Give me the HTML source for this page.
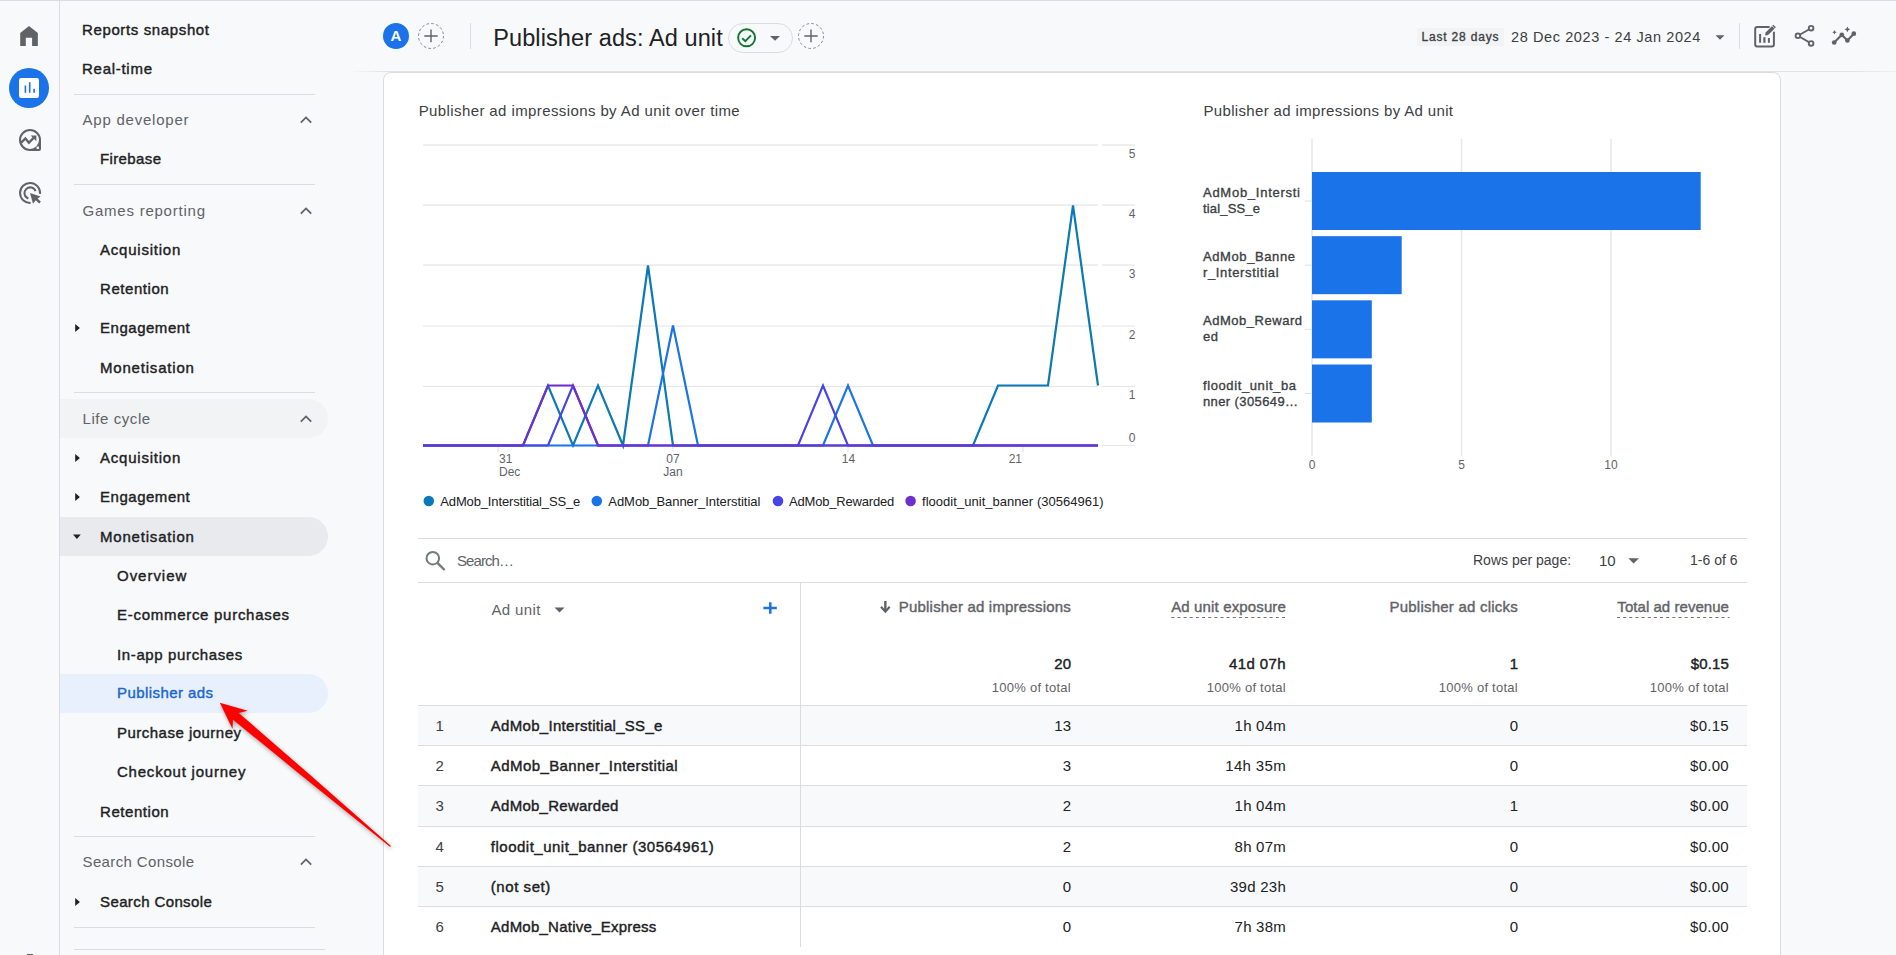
<!DOCTYPE html>
<html><head><meta charset="utf-8"><title>Publisher ads: Ad unit</title><style>
*{box-sizing:border-box;margin:0;padding:0}
html,body{width:1896px;height:955px;overflow:hidden}
body{background:#f8f9fa;font-family:"Liberation Sans",sans-serif;position:relative}
.a{position:absolute}
.t{position:absolute;white-space:nowrap}
svg{position:absolute;overflow:visible}
</style></head><body>
<div class="a" style="left:0;top:0;width:1896px;height:1px;background:#dadce0"></div>
<div class="a" style="left:59px;top:0;width:1px;height:955px;background:#dadce0"></div>
<div class="a" style="left:27px;top:954px;width:6px;height:1px;background:#5f6368"></div>
<svg style="left:0;top:0" width="60" height="220" viewBox="0 0 60 220">
<path d="M20.2 46V33L29 26.1 37.85 33V46H32.1V37.8H25.8V46Z" fill="#5f6368"/>
<circle cx="29" cy="88" r="20" fill="#1a73e8"/>
<rect x="19" y="78" width="20" height="20" rx="2.2" fill="#fff"/>
<rect x="24.6" y="85.5" width="1.6" height="7.3" fill="#1a73e8"/>
<rect x="28.9" y="82.2" width="1.6" height="10.6" fill="#1a73e8"/>
<rect x="33.3" y="88.8" width="1.6" height="4" fill="#1a73e8"/>
<path fill-rule="evenodd" fill="#5f6368" d="M30 129A11 11 0 0 0 19 140A11 11 0 0 0 30 151H39A2 2 0 0 0 41 149V140A11 11 0 0 0 30 129ZM30 131A9 9 0 1 1 30 149A9 9 0 1 1 30 131ZM36.6 146.6h2.3v2.3h-2.3Z"/>
<path d="M21.2 142.6L25.4 138.4 28.9 142.8 33.6 137.9" fill="none" stroke="#5f6368" stroke-width="2.3" stroke-linejoin="miter"/>
<path d="M30.7 135.6H36.4V141.3Z" fill="#5f6368"/>
<path d="M40 193.8A10 10 0 1 0 30.6 202.9" fill="none" stroke="#5f6368" stroke-width="2"/>
<path d="M35.6 191.2A5.7 5.7 0 1 0 28.4 198.5" fill="none" stroke="#5f6368" stroke-width="2"/>
<path d="M30 193L40.6 196.6 37.6 198.4 40.9 201.8 39.1 203.6 35.8 200.3 33 203.7Z" fill="#5f6368"/>
</svg>
<div class="a" style="left:60px;top:399px;width:268px;height:39px;background:#f1f3f4;border-radius:0 19.5px 19.5px 0"></div>
<div class="a" style="left:60px;top:517px;width:268px;height:39px;background:#e8eaed;border-radius:0 19.5px 19.5px 0"></div>
<div class="a" style="left:60px;top:674px;width:268px;height:39px;background:#e8f0fe;border-radius:0 19.5px 19.5px 0"></div>
<div class="t" style="left:82px;top:21px;font-size:15px;line-height:17px;-webkit-text-stroke:0.4px #202124;color:#202124;letter-spacing:0.628px;">Reports snapshot</div>
<div class="t" style="left:82px;top:60px;font-size:15px;line-height:17px;-webkit-text-stroke:0.4px #202124;color:#202124;letter-spacing:0.727px;">Real-time</div>
<div class="a" style="left:74px;top:94px;width:241px;height:1px;background:#dadce0"></div>
<div class="t" style="left:82.5px;top:111px;font-size:15px;line-height:17px;color:#5f6368;letter-spacing:0.771px;">App developer</div>
<svg style="left:0;top:0" width="1" height="1"><path d="M300.8 122.6L306 117.4L311.2 122.6" fill="none" stroke="#5f6368" stroke-width="1.8"/></svg>
<div class="t" style="left:100px;top:150px;font-size:15px;line-height:17px;-webkit-text-stroke:0.4px #202124;color:#202124;letter-spacing:0.377px;">Firebase</div>
<div class="a" style="left:74px;top:184px;width:241px;height:1px;background:#dadce0"></div>
<div class="t" style="left:82.5px;top:202px;font-size:15px;line-height:17px;color:#5f6368;letter-spacing:0.770px;">Games reporting</div>
<svg style="left:0;top:0" width="1" height="1"><path d="M300.8 213.6L306 208.4L311.2 213.6" fill="none" stroke="#5f6368" stroke-width="1.8"/></svg>
<div class="t" style="left:100px;top:241px;font-size:15px;line-height:17px;-webkit-text-stroke:0.4px #202124;color:#202124;letter-spacing:0.775px;">Acquisition</div>
<div class="t" style="left:100px;top:280px;font-size:15px;line-height:17px;-webkit-text-stroke:0.4px #202124;color:#202124;letter-spacing:0.560px;">Retention</div>
<div class="t" style="left:100px;top:319px;font-size:15px;line-height:17px;-webkit-text-stroke:0.4px #202124;color:#202124;letter-spacing:0.525px;">Engagement</div>
<svg style="left:0;top:0" width="1" height="1"><path d="M75.2 324L79.9 328L75.2 332Z" fill="#202124"/></svg>
<div class="t" style="left:100px;top:359px;font-size:15px;line-height:17px;-webkit-text-stroke:0.4px #202124;color:#202124;letter-spacing:0.803px;">Monetisation</div>
<div class="a" style="left:74px;top:392px;width:241px;height:1px;background:#dadce0"></div>
<div class="t" style="left:82.5px;top:410px;font-size:15px;line-height:17px;color:#5f6368;letter-spacing:0.574px;">Life cycle</div>
<svg style="left:0;top:0" width="1" height="1"><path d="M300.8 421.6L306 416.4L311.2 421.6" fill="none" stroke="#5f6368" stroke-width="1.8"/></svg>
<div class="t" style="left:100px;top:449px;font-size:15px;line-height:17px;-webkit-text-stroke:0.4px #202124;color:#202124;letter-spacing:0.775px;">Acquisition</div>
<svg style="left:0;top:0" width="1" height="1"><path d="M75.2 454L79.9 458L75.2 462Z" fill="#202124"/></svg>
<div class="t" style="left:100px;top:488px;font-size:15px;line-height:17px;-webkit-text-stroke:0.4px #202124;color:#202124;letter-spacing:0.525px;">Engagement</div>
<svg style="left:0;top:0" width="1" height="1"><path d="M75.2 493L79.9 497L75.2 501Z" fill="#202124"/></svg>
<div class="t" style="left:100px;top:528px;font-size:15px;line-height:17px;-webkit-text-stroke:0.4px #202124;color:#202124;letter-spacing:0.803px;">Monetisation</div>
<svg style="left:0;top:0" width="1" height="1"><path d="M73 534.5L80.8 534.5L76.9 539Z" fill="#202124"/></svg>
<div class="t" style="left:117px;top:567px;font-size:15px;line-height:17px;-webkit-text-stroke:0.4px #202124;color:#202124;letter-spacing:0.969px;">Overview</div>
<div class="t" style="left:117px;top:606px;font-size:15px;line-height:17px;-webkit-text-stroke:0.4px #202124;color:#202124;letter-spacing:0.716px;">E-commerce purchases</div>
<div class="t" style="left:117px;top:646px;font-size:15px;line-height:17px;-webkit-text-stroke:0.4px #202124;color:#202124;letter-spacing:0.626px;">In-app purchases</div>
<div class="t" style="left:117px;top:684px;font-size:15px;line-height:17px;-webkit-text-stroke:0.4px #1967d2;color:#1967d2;letter-spacing:0.426px;">Publisher ads</div>
<div class="t" style="left:117px;top:724px;font-size:15px;line-height:17px;-webkit-text-stroke:0.4px #202124;color:#202124;letter-spacing:0.484px;">Purchase journey</div>
<div class="t" style="left:117px;top:763px;font-size:15px;line-height:17px;-webkit-text-stroke:0.4px #202124;color:#202124;letter-spacing:0.778px;">Checkout journey</div>
<div class="t" style="left:100px;top:803px;font-size:15px;line-height:17px;-webkit-text-stroke:0.4px #202124;color:#202124;letter-spacing:0.560px;">Retention</div>
<div class="a" style="left:74px;top:836px;width:241px;height:1px;background:#dadce0"></div>
<div class="t" style="left:82.5px;top:853px;font-size:15px;line-height:17px;color:#5f6368;letter-spacing:0.374px;">Search Console</div>
<svg style="left:0;top:0" width="1" height="1"><path d="M300.8 864.6L306 859.4L311.2 864.6" fill="none" stroke="#5f6368" stroke-width="1.8"/></svg>
<div class="t" style="left:100px;top:893px;font-size:15px;line-height:17px;-webkit-text-stroke:0.4px #202124;color:#202124;letter-spacing:0.390px;">Search Console</div>
<svg style="left:0;top:0" width="1" height="1"><path d="M75.2 898L79.9 902L75.2 906Z" fill="#202124"/></svg>
<div class="a" style="left:74px;top:927px;width:241px;height:1px;background:#dadce0"></div>
<div class="a" style="left:74px;top:949px;width:251px;height:1px;background:#dadce0"></div>
<div class="a" style="left:348px;top:71px;width:1548px;height:1px;background:linear-gradient(90deg,rgba(60,64,67,0),rgba(60,64,67,.12) 40px,rgba(60,64,67,.12) 1500px,rgba(60,64,67,.05))"></div>
<svg style="left:0;top:0" width="1" height="1">
<circle cx="396" cy="36" r="13" fill="#1a73e8"/>
<circle cx="431" cy="36" r="12.5" fill="none" stroke="#80868b" stroke-width="1" stroke-dasharray="2.6 2.3"/>
<path d="M424.3 36H437.7M431 29.6V42.3" stroke="#5f6368" stroke-width="1.4"/>
<rect x="470" y="23" width="1" height="26" fill="#dadce0"/>
<rect x="728.5" y="23.5" width="64" height="29" rx="14.5" fill="none" stroke="#dadce0"/>
<circle cx="746.6" cy="37.8" r="8.5" fill="none" stroke="#137333" stroke-width="1.9"/>
<path d="M742.2 38.2L745.3 41.2L751 35.3" fill="none" stroke="#137333" stroke-width="1.9"/>
<path d="M770 36.1H780L775 40.8Z" fill="#5f6368"/>
<circle cx="811" cy="36" r="12.5" fill="none" stroke="#80868b" stroke-width="1" stroke-dasharray="2.6 2.3"/>
<path d="M804.3 36H817.7M811 29.6V42.3" stroke="#5f6368" stroke-width="1.4"/>
<rect x="1417" y="28" width="87" height="18" fill="#f1f3f4"/>
<path d="M1715.5 35.2H1724.5L1720 39.8Z" fill="#5f6368"/>
<rect x="1739" y="23" width="1" height="26" fill="#dadce0"/>
<path d="M1769.6 27.1H1757.2A2 2 0 0 0 1755.2 29.1V44.5A2 2 0 0 0 1757.2 46.5H1771.9A2 2 0 0 0 1773.9 44.5V31.7" fill="none" stroke="#5f6368" stroke-width="2"/>
<rect x="1759.1" y="34" width="2" height="8.8" fill="#5f6368"/>
<rect x="1763.3" y="37.2" width="2.2" height="5.6" fill="#5f6368"/>
<rect x="1767.9" y="38" width="2" height="4.8" fill="#5f6368"/>
<path d="M1765.1 35.6L1765.6 32.6L1773.4 24.8L1775.9 27.3L1768.1 35.1Z" fill="#5f6368"/>
<path d="M1772.2 26L1774.7 28.5" stroke="#f8f9fa" stroke-width="0.8"/>
<path d="M1811.1 28.2L1797.9 35.8L1811.1 43.4" fill="none" stroke="#5f6368" stroke-width="1.8"/>
<circle cx="1811.1" cy="28.2" r="2.3" fill="#f8f9fa" stroke="#5f6368" stroke-width="1.9"/>
<circle cx="1797.9" cy="35.8" r="2.3" fill="#f8f9fa" stroke="#5f6368" stroke-width="1.9"/>
<circle cx="1811.1" cy="43.4" r="2.3" fill="#f8f9fa" stroke="#5f6368" stroke-width="1.9"/>
<path d="M1834.2 42.5L1841.8 34.8L1847.4 40.5L1853.8 33.7" fill="none" stroke="#5f6368" stroke-width="2.1" stroke-linejoin="round"/>
<circle cx="1834.2" cy="42.5" r="2.35" fill="#5f6368"/>
<circle cx="1841.8" cy="34.8" r="2.35" fill="#5f6368"/>
<circle cx="1847.4" cy="40.5" r="2.35" fill="#5f6368"/>
<circle cx="1853.8" cy="33.7" r="2.35" fill="#5f6368"/>
<path d="M1847.4 26.4Q1847.9 28.8 1850.3 29.3Q1847.9 29.8 1847.4 32.2Q1846.9 29.8 1844.5 29.3Q1846.9 28.8 1847.4 26.4Z" fill="#5f6368"/>
<path d="M1834.5 30.1Q1834.8 32 1836.7 32.3Q1834.8 32.6 1834.5 34.5Q1834.2 32.6 1832.3 32.3Q1834.2 32 1834.5 30.1Z" fill="#5f6368"/>
</svg>
<div class="t" style="left:96px;width:600px;text-align:center;top:27px;font-size:15px;line-height:17px;font-weight:bold;color:#fff;">A</div>
<div class="t" style="left:493.2px;top:25px;font-size:23.5px;line-height:26px;color:#202124;letter-spacing:0.104px;">Publisher ads: Ad unit</div>
<div class="t" style="left:1421.5px;top:30px;font-size:12px;line-height:14px;-webkit-text-stroke:0.35px #3c4043;color:#3c4043;letter-spacing:0.814px;">Last 28 days</div>
<div class="t" style="left:1511px;top:29px;font-size:14.5px;line-height:16px;color:#3c4043;letter-spacing:0.598px;">28 Dec 2023 - 24 Jan 2024</div>
<div class="a" style="left:383px;top:72px;width:1398px;height:1000px;background:#fff;border:1px solid #dadce0;border-radius:8px"></div>
<div class="t" style="left:418.7px;top:102px;font-size:15px;line-height:17px;color:#3c4043;letter-spacing:0.398px;">Publisher ad impressions by Ad unit over time</div>
<svg style="left:0;top:0" width="1" height="1">
<rect x="423" y="144.4" width="675" height="1.3" fill="#e6e6e6"/>
<rect x="1102" y="144.4" width="33" height="1.3" fill="#e6e6e6"/>
<rect x="423" y="204.4" width="675" height="1.3" fill="#e6e6e6"/>
<rect x="1102" y="204.4" width="33" height="1.3" fill="#e6e6e6"/>
<rect x="423" y="264.4" width="675" height="1.3" fill="#e6e6e6"/>
<rect x="1102" y="264.4" width="33" height="1.3" fill="#e6e6e6"/>
<rect x="423" y="325.5" width="675" height="1.1" fill="#e6e6e6"/>
<rect x="1102" y="325.5" width="33" height="1.1" fill="#e6e6e6"/>
<rect x="423" y="385.9" width="675" height="1.1" fill="#e6e6e6"/>
<rect x="1102" y="385.9" width="33" height="1.1" fill="#e6e6e6"/>
<rect x="423" y="444.9" width="675" height="1.2" fill="#e6e6e6"/>
<rect x="1102" y="444.9" width="33" height="1.2" fill="#e6e6e6"/>
<rect x="497.5" y="447" width="1" height="5" fill="#e0e0e0"/>
<rect x="672.5" y="447" width="1" height="5" fill="#e0e0e0"/>
<rect x="847.5" y="447" width="1" height="5" fill="#e0e0e0"/>
<rect x="1022.5" y="447" width="1" height="5" fill="#e0e0e0"/>
<polyline points="423,445.5 448,445.5 473,445.5 498,445.5 523,445.5 548,385.5 573,445.5 598,385.5 623,445.5 648,265.5 673,445.5 698,445.5 723,445.5 748,445.5 773,445.5 798,445.5 823,445.5 848,445.5 873,445.5 898,445.5 923,445.5 948,445.5 973,445.5 998,385.5 1023,385.5 1048,385.5 1073,205.5 1098,385.5" fill="none" stroke="#0b78b8" stroke-width="2.2" stroke-linejoin="miter"/>
<polyline points="423,445.5 448,445.5 473,445.5 498,445.5 523,445.5 548,445.5 573,445.5 598,445.5 623,445.5 648,445.5 673,325.5 698,445.5 723,445.5 748,445.5 773,445.5 798,445.5 823,445.5 848,385.5 873,445.5 898,445.5 923,445.5 948,445.5 973,445.5 998,445.5 1023,445.5 1048,445.5 1073,445.5 1098,445.5" fill="none" stroke="#1a73e8" stroke-width="2.2" stroke-linejoin="miter"/>
<polyline points="423,445.5 448,445.5 473,445.5 498,445.5 523,445.5 548,445.5 573,385.5 598,445.5 623,445.5 648,445.5 673,445.5 698,445.5 723,445.5 748,445.5 773,445.5 798,445.5 823,385.5 848,445.5 873,445.5 898,445.5 923,445.5 948,445.5 973,445.5 998,445.5 1023,445.5 1048,445.5 1073,445.5 1098,445.5" fill="none" stroke="#4744e6" stroke-width="2.2" stroke-linejoin="miter"/>
<polyline points="423,445.5 448,445.5 473,445.5 498,445.5 523,445.5 548,385.5 573,385.5 598,445.5 623,445.5 648,445.5 673,445.5 698,445.5 723,445.5 748,445.5 773,445.5 798,445.5 823,445.5 848,445.5 873,445.5 898,445.5 923,445.5 948,445.5 973,445.5 998,445.5 1023,445.5 1048,445.5 1073,445.5 1098,445.5" fill="none" stroke="#6f2fcf" stroke-width="2.2" stroke-linejoin="miter"/>
<circle cx="428.8" cy="501" r="5.3" fill="#0b78b8"/>
<circle cx="596.8" cy="501" r="5.3" fill="#1a73e8"/>
<circle cx="778" cy="501" r="5.3" fill="#4744e6"/>
<circle cx="910.6" cy="501" r="5.3" fill="#6f2fcf"/>
</svg>
<div class="t" style="right:760.5px;top:388px;font-size:12px;line-height:14px;color:#5f6368;">1</div>
<div class="t" style="right:760.5px;top:328px;font-size:12px;line-height:14px;color:#5f6368;">2</div>
<div class="t" style="right:760.5px;top:267px;font-size:12px;line-height:14px;color:#5f6368;">3</div>
<div class="t" style="right:760.5px;top:207px;font-size:12px;line-height:14px;color:#5f6368;">4</div>
<div class="t" style="right:760.5px;top:147px;font-size:12px;line-height:14px;color:#5f6368;">5</div>
<div class="t" style="right:760.5px;top:431px;font-size:12px;line-height:14px;color:#5f6368;">0</div>
<div class="t" style="left:499px;top:452px;font-size:12px;line-height:14px;color:#5f6368;">31</div>
<div class="t" style="left:499px;top:465px;font-size:12px;line-height:14px;color:#5f6368;">Dec</div>
<div class="t" style="left:373px;width:600px;text-align:center;top:452px;font-size:12px;line-height:14px;color:#5f6368;">07</div>
<div class="t" style="left:373px;width:600px;text-align:center;top:465px;font-size:12px;line-height:14px;color:#5f6368;">Jan</div>
<div class="t" style="left:548.5px;width:600px;text-align:center;top:452px;font-size:12px;line-height:14px;color:#5f6368;">14</div>
<div class="t" style="right:874px;top:452px;font-size:12px;line-height:14px;color:#5f6368;">21</div>
<div class="t" style="left:440.3px;top:494px;font-size:13px;line-height:15px;color:#202124;letter-spacing:-0.141px;">AdMob_Interstitial_SS_e</div>
<div class="t" style="left:608.3px;top:494px;font-size:13px;line-height:15px;color:#202124;letter-spacing:-0.050px;">AdMob_Banner_Interstitial</div>
<div class="t" style="left:789px;top:494px;font-size:13px;line-height:15px;color:#202124;letter-spacing:-0.184px;">AdMob_Rewarded</div>
<div class="t" style="left:922px;top:494px;font-size:13px;line-height:15px;color:#202124;letter-spacing:0.034px;">floodit_unit_banner (30564961)</div>
<div class="t" style="left:1203.4px;top:102px;font-size:15px;line-height:17px;color:#3c4043;letter-spacing:0.352px;">Publisher ad impressions by Ad unit</div>
<svg style="left:0;top:0" width="1" height="1">
<rect x="1311.25" y="139" width="1.5" height="317" fill="#e8e8e8"/>
<rect x="1460.75" y="139" width="1.5" height="317" fill="#e8e8e8"/>
<rect x="1610.25" y="139" width="1.5" height="317" fill="#e8e8e8"/>
<rect x="1312" y="172.0" width="388.7" height="58" fill="#1a73e8"/>
<rect x="1305" y="200.5" width="7" height="1" fill="#e0e0e0"/>
<rect x="1312" y="236.17" width="89.7" height="58" fill="#1a73e8"/>
<rect x="1305" y="264.66999999999996" width="7" height="1" fill="#e0e0e0"/>
<rect x="1312" y="300.34" width="59.8" height="58" fill="#1a73e8"/>
<rect x="1305" y="328.84" width="7" height="1" fill="#e0e0e0"/>
<rect x="1312" y="364.51" width="59.8" height="58" fill="#1a73e8"/>
<rect x="1305" y="393.01" width="7" height="1" fill="#e0e0e0"/>
</svg>
<div class="t" style="left:1203px;top:185px;font-size:13px;line-height:15px;-webkit-text-stroke:0.35px #3c4043;color:#3c4043;letter-spacing:0.736px;">AdMob_Intersti</div>
<div class="t" style="left:1203px;top:201px;font-size:13px;line-height:15px;-webkit-text-stroke:0.35px #3c4043;color:#3c4043;letter-spacing:0.168px;">tial_SS_e</div>
<div class="t" style="left:1203px;top:249px;font-size:13px;line-height:15px;-webkit-text-stroke:0.35px #3c4043;color:#3c4043;letter-spacing:0.598px;">AdMob_Banne</div>
<div class="t" style="left:1203px;top:265px;font-size:13px;line-height:15px;-webkit-text-stroke:0.35px #3c4043;color:#3c4043;letter-spacing:0.646px;">r_Interstitial</div>
<div class="t" style="left:1203px;top:313px;font-size:13px;line-height:15px;-webkit-text-stroke:0.35px #3c4043;color:#3c4043;letter-spacing:0.526px;">AdMob_Reward</div>
<div class="t" style="left:1203px;top:329px;font-size:13px;line-height:15px;-webkit-text-stroke:0.35px #3c4043;color:#3c4043;letter-spacing:0.531px;">ed</div>
<div class="t" style="left:1203px;top:378px;font-size:13px;line-height:15px;-webkit-text-stroke:0.35px #3c4043;color:#3c4043;letter-spacing:0.602px;">floodit_unit_ba</div>
<div class="t" style="left:1203px;top:394px;font-size:13px;line-height:15px;-webkit-text-stroke:0.35px #3c4043;color:#3c4043;letter-spacing:0.388px;">nner (305649…</div>
<div class="t" style="left:1012px;width:600px;text-align:center;top:458px;font-size:12px;line-height:14px;color:#5f6368;">0</div>
<div class="t" style="left:1161.5px;width:600px;text-align:center;top:458px;font-size:12px;line-height:14px;color:#5f6368;">5</div>
<div class="t" style="left:1311px;width:600px;text-align:center;top:458px;font-size:12px;line-height:14px;color:#5f6368;">10</div>
<div class="a" style="left:418px;top:538px;width:1329px;height:1px;background:#dadce0"></div>
<div class="a" style="left:418px;top:582px;width:1329px;height:1px;background:#dadce0"></div>
<svg style="left:0;top:0" width="1" height="1">
<circle cx="432.8" cy="558.2" r="6.3" fill="none" stroke="#757a7f" stroke-width="2"/>
<path d="M437.4 562.8L444.6 570" stroke="#757a7f" stroke-width="2.4"/>
<path d="M1628.3 558.3H1639L1633.6 563.6Z" fill="#5f6368"/>
<path d="M554.5 607.5H564.5L559.5 612.5Z" fill="#5f6368"/>
<path d="M763.4 608.1H776.8M770.3 602.3V613.7" stroke="#1a73e8" stroke-width="2.5"/>
<path d="M885.35 601V610" stroke="#5f6368" stroke-width="2.4"/>
<path d="M880.2 607.4L885.35 613.2L890.5 607.4L888.9 606L885.35 610L881.8 606Z" fill="#5f6368"/>
</svg>
<div class="t" style="left:457px;top:552px;font-size:15px;line-height:17px;color:#5f6368;letter-spacing:-0.922px;">Search&hellip;</div>
<div class="t" style="left:1473px;top:552px;font-size:14px;line-height:16px;color:#3c4043;">Rows per page:</div>
<div class="t" style="left:1599px;top:552px;font-size:15px;line-height:17px;color:#3c4043;">10</div>
<div class="t" style="right:158.5px;top:552px;font-size:14px;line-height:16px;color:#3c4043;">1-6 of 6</div>
<div class="t" style="left:491.5px;top:601px;font-size:15px;line-height:17px;color:#5f6368;letter-spacing:0.349px;">Ad unit</div>
<div class="t" style="right:825px;top:598px;font-size:15px;line-height:17px;-webkit-text-stroke:0.4px #5f6368;color:#5f6368;letter-spacing:0.192px;">Publisher ad impressions</div>
<div class="t" style="right:610px;top:598px;font-size:15px;line-height:17px;-webkit-text-stroke:0.4px #5f6368;color:#5f6368;letter-spacing:0.141px;">Ad unit exposure</div>
<div class="t" style="right:378px;top:598px;font-size:15px;line-height:17px;-webkit-text-stroke:0.4px #5f6368;color:#5f6368;letter-spacing:0.227px;">Publisher ad clicks</div>
<div class="t" style="right:167px;top:598px;font-size:15px;line-height:17px;-webkit-text-stroke:0.4px #5f6368;color:#5f6368;letter-spacing:0.045px;">Total ad revenue</div>
<svg style="left:0;top:0" width="1" height="1"><path d="M1171.3 617.5H1286.5M1617 617.5H1729.5" stroke="#70757a" stroke-width="1" stroke-dasharray="3 3.15"/></svg>
<div class="t" style="right:825px;top:655px;font-size:15px;line-height:17px;-webkit-text-stroke:0.4px #202124;color:#202124;">20</div>
<div class="t" style="right:825px;top:680px;font-size:13px;line-height:15px;color:#5f6368;letter-spacing:0.259px;">100% of total</div>
<div class="t" style="right:610px;top:655px;font-size:15px;line-height:17px;-webkit-text-stroke:0.4px #202124;color:#202124;letter-spacing:0.411px;">41d 07h</div>
<div class="t" style="right:610px;top:680px;font-size:13px;line-height:15px;color:#5f6368;letter-spacing:0.259px;">100% of total</div>
<div class="t" style="right:378px;top:655px;font-size:15px;line-height:17px;-webkit-text-stroke:0.4px #202124;color:#202124;">1</div>
<div class="t" style="right:378px;top:680px;font-size:13px;line-height:15px;color:#5f6368;letter-spacing:0.259px;">100% of total</div>
<div class="t" style="right:167px;top:655px;font-size:15px;line-height:17px;-webkit-text-stroke:0.4px #202124;color:#202124;letter-spacing:0.163px;">$0.15</div>
<div class="t" style="right:167px;top:680px;font-size:13px;line-height:15px;color:#5f6368;letter-spacing:0.259px;">100% of total</div>
<div class="a" style="left:418px;top:705px;width:1329px;height:1px;background:#dadce0"></div>
<div class="a" style="left:418px;top:706px;width:1329px;height:40px;background:#f8f9fa"></div>
<div class="a" style="left:418px;top:745px;width:1329px;height:1px;background:#dadce0"></div>
<div class="t" style="left:435.5px;top:717px;font-size:15px;line-height:17px;color:#3c4043;">1</div>
<div class="t" style="left:490.8px;top:717px;font-size:15px;line-height:17px;-webkit-text-stroke:0.4px #202124;color:#202124;letter-spacing:0.295px;">AdMob_Interstitial_SS_e</div>
<div class="t" style="right:825px;top:717px;font-size:15px;line-height:17px;color:#202124;">13</div>
<div class="t" style="right:610px;top:717px;font-size:15px;line-height:17px;color:#202124;letter-spacing:0.231px;">1h 04m</div>
<div class="t" style="right:378px;top:717px;font-size:15px;line-height:17px;color:#202124;">0</div>
<div class="t" style="right:167px;top:717px;font-size:15px;line-height:17px;color:#202124;letter-spacing:0.288px;">$0.15</div>
<div class="a" style="left:418px;top:785px;width:1329px;height:1px;background:#dadce0"></div>
<div class="t" style="left:435.5px;top:757px;font-size:15px;line-height:17px;color:#3c4043;">2</div>
<div class="t" style="left:490.8px;top:757px;font-size:15px;line-height:17px;-webkit-text-stroke:0.4px #202124;color:#202124;letter-spacing:0.417px;">AdMob_Banner_Interstitial</div>
<div class="t" style="right:825px;top:757px;font-size:15px;line-height:17px;color:#202124;">3</div>
<div class="t" style="right:610px;top:757px;font-size:15px;line-height:17px;color:#202124;letter-spacing:0.337px;">14h 35m</div>
<div class="t" style="right:378px;top:757px;font-size:15px;line-height:17px;color:#202124;">0</div>
<div class="t" style="right:167px;top:757px;font-size:15px;line-height:17px;color:#202124;letter-spacing:0.288px;">$0.00</div>
<div class="a" style="left:418px;top:786px;width:1329px;height:41px;background:#f8f9fa"></div>
<div class="a" style="left:418px;top:826px;width:1329px;height:1px;background:#dadce0"></div>
<div class="t" style="left:435.5px;top:797px;font-size:15px;line-height:17px;color:#3c4043;">3</div>
<div class="t" style="left:490.8px;top:797px;font-size:15px;line-height:17px;-webkit-text-stroke:0.4px #202124;color:#202124;letter-spacing:0.258px;">AdMob_Rewarded</div>
<div class="t" style="right:825px;top:797px;font-size:15px;line-height:17px;color:#202124;">2</div>
<div class="t" style="right:610px;top:797px;font-size:15px;line-height:17px;color:#202124;letter-spacing:0.231px;">1h 04m</div>
<div class="t" style="right:378px;top:797px;font-size:15px;line-height:17px;color:#202124;">1</div>
<div class="t" style="right:167px;top:797px;font-size:15px;line-height:17px;color:#202124;letter-spacing:0.288px;">$0.00</div>
<div class="a" style="left:418px;top:866px;width:1329px;height:1px;background:#dadce0"></div>
<div class="t" style="left:435.5px;top:838px;font-size:15px;line-height:17px;color:#3c4043;">4</div>
<div class="t" style="left:490.8px;top:838px;font-size:15px;line-height:17px;-webkit-text-stroke:0.4px #202124;color:#202124;letter-spacing:0.497px;">floodit_unit_banner (30564961)</div>
<div class="t" style="right:825px;top:838px;font-size:15px;line-height:17px;color:#202124;">2</div>
<div class="t" style="right:610px;top:838px;font-size:15px;line-height:17px;color:#202124;letter-spacing:0.231px;">8h 07m</div>
<div class="t" style="right:378px;top:838px;font-size:15px;line-height:17px;color:#202124;">0</div>
<div class="t" style="right:167px;top:838px;font-size:15px;line-height:17px;color:#202124;letter-spacing:0.288px;">$0.00</div>
<div class="a" style="left:418px;top:867px;width:1329px;height:40px;background:#f8f9fa"></div>
<div class="a" style="left:418px;top:906px;width:1329px;height:1px;background:#dadce0"></div>
<div class="t" style="left:435.5px;top:878px;font-size:15px;line-height:17px;color:#3c4043;">5</div>
<div class="t" style="left:490.8px;top:878px;font-size:15px;line-height:17px;-webkit-text-stroke:0.4px #202124;color:#202124;letter-spacing:0.559px;">(not set)</div>
<div class="t" style="right:825px;top:878px;font-size:15px;line-height:17px;color:#202124;">0</div>
<div class="t" style="right:610px;top:878px;font-size:15px;line-height:17px;color:#202124;letter-spacing:0.261px;">39d 23h</div>
<div class="t" style="right:378px;top:878px;font-size:15px;line-height:17px;color:#202124;">0</div>
<div class="t" style="right:167px;top:878px;font-size:15px;line-height:17px;color:#202124;letter-spacing:0.288px;">$0.00</div>
<div class="t" style="left:435.5px;top:918px;font-size:15px;line-height:17px;color:#3c4043;">6</div>
<div class="t" style="left:490.8px;top:918px;font-size:15px;line-height:17px;-webkit-text-stroke:0.4px #202124;color:#202124;letter-spacing:0.241px;">AdMob_Native_Express</div>
<div class="t" style="right:825px;top:918px;font-size:15px;line-height:17px;color:#202124;">0</div>
<div class="t" style="right:610px;top:918px;font-size:15px;line-height:17px;color:#202124;letter-spacing:0.231px;">7h 38m</div>
<div class="t" style="right:378px;top:918px;font-size:15px;line-height:17px;color:#202124;">0</div>
<div class="t" style="right:167px;top:918px;font-size:15px;line-height:17px;color:#202124;letter-spacing:0.288px;">$0.00</div>
<div class="a" style="left:800px;top:582px;width:1px;height:365px;background:#dadce0"></div>
<svg style="left:0;top:0;filter:drop-shadow(1px 2px 2px rgba(0,0,0,.35))" width="1" height="1"><polygon points="219.8,702.8 247.7,710.8 238.8,712.9 305.9,771.3 390.7,845.8 390.7,846.6 389.9,846.8 302.0,775.9 233.0,719.8 232.5,728.9" fill="#ff0000"/></svg>
</body></html>
